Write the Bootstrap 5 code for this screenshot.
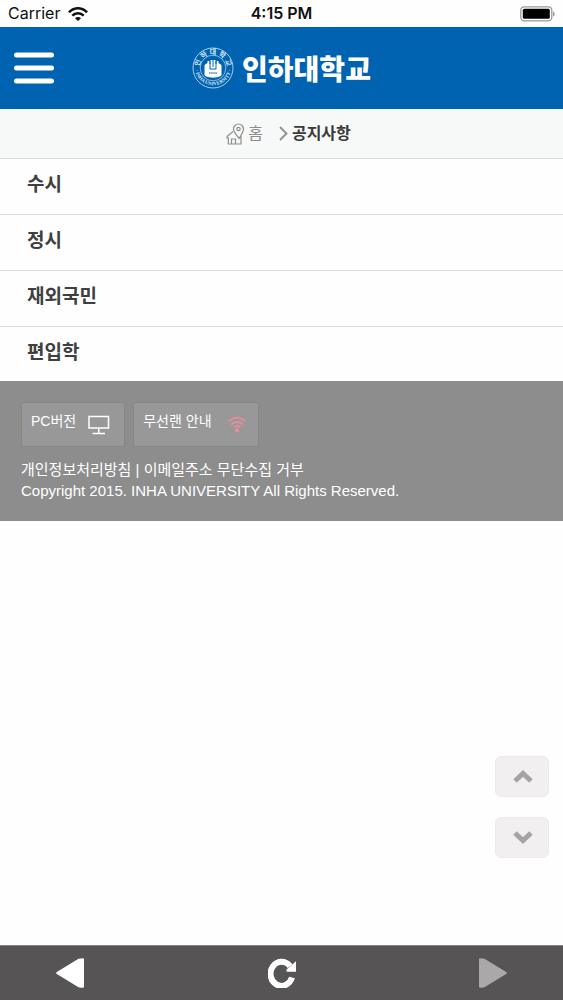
<!DOCTYPE html>
<html lang="ko">
<head>
<meta charset="utf-8">
<meta name="viewport" content="width=device-width, initial-scale=1">
<title>인하대학교 공지사항</title>
<link href="https://cdn.jsdelivr.net/npm/bootstrap@5.3.0/dist/css/bootstrap.min.css" rel="stylesheet">
<style>
  body { font-family: "Liberation Sans", "Noto Sans CJK KR", sans-serif; background: #fefefe; color: #3a3a3a; }
  svg { display: block; }
  .status-bar { height: 27px; font: 400 16px/27px Inter, sans-serif; color: #111; padding: 0 8px; }
  .status-time { font-weight: 600; }
  .site-header { height: 82px; background: #0063b1; padding: 0 13px; }
  .site-brand { font: 900 28px/32px "Noto Sans CJK KR", sans-serif; color: #fff; text-decoration: none; }
  .seal-text { font: 700 7px "Noto Sans CJK KR", sans-serif; }
  .crumbs { height: 50px; background: #f7f8f8; border-bottom: 1px solid #dcdddd; font-size: 16px; line-height: 24px; padding-left: 14px; }
  .crumbs a { color: #8c8c8c; }
  .notice-list .list-group-item { height: 56px; padding: 12px 27px 0; font-size: 19px; line-height: 28px; font-weight: 700; color: #3f3f3f; background: #fefefe; border-color: #dcdddd; }
  .notice-list .list-group-item:last-child { height: 54px; }
  .site-footer { background: #8d8d8d; padding: 21px 21px 20px; font-size: 15px; line-height: 21px; color: #fff; }
  .site-footer a { color: #fff; text-decoration: none; }
  .foot-btn { height: 45px; border: 1px solid #868686; border-radius: 2px; background: #989898; color: #fff; font-size: 14px; line-height: 20px; padding: 0 14px 0 9px; }
  .foot-btn span { padding-bottom: 8px; }
  .foot-btn-wifi { padding-right: 12px; }
  .scroll-tools { right: 14px; bottom: 142px; gap: 20px; }
  .scroll-tools button { width: 54px; height: 41px; border: 1px solid #eceaeb; border-radius: 6px; background: #f1eff0; padding: 0 0 0 2px; }
  .nav-tools { height: 55px; background: #565455; border-top: 1px solid #858585; padding: 0 56px; }
  .nav-tools button { background: none; border: 0; padding: 0; }
</style>
</head>
<body>
<div class="status-bar row g-0">
  <div class="col d-flex align-items-center gap-2">
    <span>Carrier</span>
    <svg width="20" height="14" viewBox="0 0 20 14" fill="none" stroke="#111" stroke-width="2.6" aria-hidden="true"><path d="M1 5.400C6-.1 14-.1 19 5.400M4.300 8.700c3.200-3.300 8.200-3.300 11.400 0"/><path d="M7 11.200c1.700-1.700 4.300-1.700 6 0l-3 2.800z" fill="#111" stroke="none"/></svg>
  </div>
  <div class="col-auto status-time">4:15 PM</div>
  <div class="col d-flex align-items-center justify-content-end">
    <svg width="35" height="16" viewBox="0 0 35 16" aria-hidden="true"><rect x=".8" y=".8" width="31" height="14" rx="3.500" fill="#fff" stroke="#999" stroke-width="1.300"/><rect x="2.800" y="2.800" width="27" height="10" rx="1.500"/><path d="M33 5.500c2.300.7 2.300 4.300 0 5z" fill="#999"/></svg>
  </div>
</div>

<header class="site-header row g-0 align-items-center">
  <div class="col">
    <button class="btn border-0 p-0" type="button" aria-label="메뉴">
      <svg width="42" height="34" viewBox="0 0 42 34" stroke="#fff" stroke-width="5" stroke-linecap="round"><path d="M3.500 4h35M3.500 17h35M3.500 30h35"/></svg>
    </button>
  </div>
  <a href="#" class="site-brand col-auto d-flex align-items-center gap-2">
    <svg width="42" height="42" viewBox="0 0 42 42" aria-hidden="true">
      <defs><path id="arcTop" d="M7.300 21a13.700 13.700 0 0 1 27.400 0"/><path id="arcBottom" d="M2.700 20a18.300 18.300 0 0 0 36.600 0"/></defs>
      <g fill="none" stroke="#a9cbe7"><circle cx="21" cy="21" r="20" stroke-width="1"/><circle cx="21" cy="21" r="12.800" stroke-width=".8"/></g>
      <g fill="#d5e7f5" class="seal-text">
        <text><textPath href="#arcTop" startOffset="50%" text-anchor="middle">인 하 대 학 교</textPath></text>
        <text style="font:700 5px 'Liberation Serif',serif"><textPath href="#arcBottom" startOffset="50%" text-anchor="middle">· INHA UNIVERSITY ·</textPath></text>
      </g>
      <path fill="#fff" d="M12.500 18l3-2v-2h2v3h1v-4h5v4h1v-3h2v2l3 2v10c-2 3.500-15 3.500-17 0z"/>
      <path d="M18 14v8h6v-8M21 12v8" fill="none" stroke="#0063b1" stroke-width="1"/>
      <path d="M17 26h8" stroke="#6ea5d3" stroke-width="1.800" stroke-dasharray="1.500 .6"/>
    </svg>
    <span>인하대학교</span>
  </a>
  <div class="col"></div>
</header>

<nav class="crumbs d-flex justify-content-center align-items-center" aria-label="위치">
  <a href="#" class="d-flex align-items-center text-decoration-none gap-1">
    <svg width="18" height="22" viewBox="0 0 18 22" fill="none" stroke="#8f8f8f" stroke-width="1.200" aria-hidden="true"><path d="M7 8.500L1 13.500v1.300h1.300V21H15v-8l-2 2.500C10.500 12 7.500 9 7.500 6a5 5 0 0 1 10 0c0 3-2.500 6-4.500 9.500M5.500 21v-5h4v5"/><circle cx="12.500" cy="6" r="1.700"/></svg>
    홈
  </a>
  <svg class="ms-3 me-1" width="9" height="15" viewBox="0 0 9 15" fill="none" stroke="#929292" stroke-width="1.900" aria-hidden="true"><path d="M1 1l6.500 6.500L1 14"/></svg>
  <strong>공지사항</strong>
</nav>

<main class="list-group list-group-flush notice-list">
  <a href="#" class="list-group-item">수시</a>
  <a href="#" class="list-group-item">정시</a>
  <a href="#" class="list-group-item">재외국민</a>
  <a href="#" class="list-group-item">편입학</a>
</main>

<footer class="site-footer">
  <div class="d-flex gap-2 mb-2 pb-1">
    <button type="button" class="foot-btn d-flex align-items-center gap-2"><span>PC버전</span>
      <svg class="ms-1" width="22" height="20" viewBox="0 0 22 20" fill="none" stroke="#fff" stroke-width="1.500" aria-hidden="true"><path d="M1 1.500h19.500v11.500H1zM10.750 13v5.500M4.500 18.500H17"/></svg>
    </button>
    <button type="button" class="foot-btn foot-btn-wifi d-flex align-items-center gap-3"><span>무선랜 안내</span>
      <svg width="18" height="17" viewBox="0 0 18 17" fill="none" stroke="#e58d9c" stroke-width="1.700" aria-hidden="true"><path d="M.6 5.800c4.600-5.500 12.200-5.500 16.800 0M3.200 8.800c3.200-4 8.400-4 11.600 0M5.700 11.500c1.900-2.200 4.700-2.200 6.600 0"/><circle cx="9" cy="14.300" r="2" fill="#f18da0" stroke="none"/></svg>
    </button>
  </div>
  <div><a href="#">개인정보처리방침</a> | <a href="#">이메일주소 무단수집 거부</a></div>
  <div>Copyright 2015. INHA UNIVERSITY All Rights Reserved.</div>
</footer>

<div class="scroll-tools position-fixed d-flex flex-column">
  <button type="button" class="d-flex align-items-center justify-content-center" aria-label="위로"><svg width="20" height="13" viewBox="0 0 20 13" fill="none" stroke="#a5a3a4" stroke-width="5"><path d="M2 11l8-7.500L18 11"/></svg></button>
  <button type="button" class="d-flex align-items-center justify-content-center" aria-label="아래로"><svg width="20" height="13" viewBox="0 0 20 13" fill="none" stroke="#a5a3a4" stroke-width="5"><path d="M2 2l8 7.500L18 2"/></svg></button>
</div>

<nav class="nav-tools fixed-bottom d-flex align-items-center justify-content-between" aria-label="탐색">
  <button type="button" aria-label="뒤로"><svg width="28" height="30" viewBox="0 0 28 30" fill="#fff"><path d="M.8 14L22.500.8Q28-.5 28 1v28q0 1.500-5.500.2L.8 16Q-.5 15 .8 14z"/></svg></button>
  <button type="button" aria-label="새로고침"><svg width="28" height="30" viewBox="0 0 28 30"><path d="M24 19.500A11 12 0 1 1 22 8.200" fill="none" stroke="#fff" stroke-width="6"/><path d="M28 3.300v10.400h-9.500v-2.200z" fill="#fff"/></svg></button>
  <button type="button" aria-label="앞으로"><svg width="28" height="30" viewBox="0 0 28 30" fill="#aaa8a9"><path d="M27.200 14L5.500.8Q0-.5 0 1v28q0 1.500 5.500.2L27.200 16Q28.500 15 27.200 14z"/></svg></button>
</nav>
<script src="https://cdn.jsdelivr.net/npm/bootstrap@5.3.0/dist/js/bootstrap.bundle.min.js"></script>
</body>
</html>
